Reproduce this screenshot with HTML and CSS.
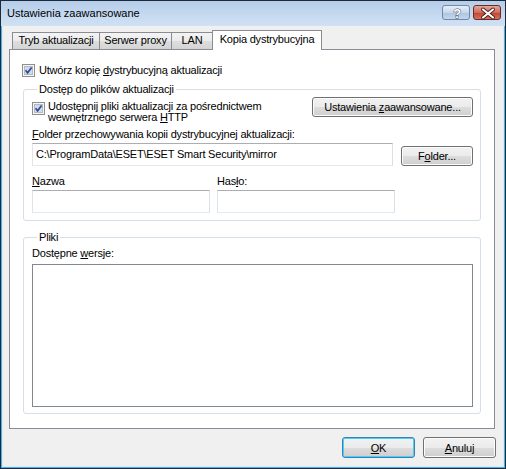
FILE: index.html
```html
<!DOCTYPE html>
<html lang="pl">
<head>
  <meta charset="UTF-8">
  <title>Ustawienia zaawansowane</title>
  <link rel="stylesheet" href="styles.css">
</head>
<body>
  <div class="window">
    <div class="titlebar">
      <span class="title">Ustawienia zaawansowane</span>
      <div class="caption-buttons">
        <span class="cap-btn help">
          <svg width="28" height="15" viewBox="0 0 28 15">
            <text x="14" y="12" text-anchor="middle" font-family="Liberation Sans, Arial, sans-serif" font-size="13" font-weight="bold" fill="#fff" stroke="#3b4a5e" stroke-width="0.9" paint-order="stroke">?</text>
          </svg>
        </span>
        <span class="cap-btn close">
          <svg width="28" height="15" viewBox="0 0 28 15">
            <path d="M9 3.5 L19 11.5 M19 3.5 L9 11.5" stroke="#4a1b17" stroke-width="3.8" stroke-linecap="round"/>
            <path d="M9 3.5 L19 11.5 M19 3.5 L9 11.5" stroke="#fff" stroke-width="2.1" stroke-linecap="round"/>
          </svg>
        </span>
      </div>
    </div>

    <div class="client">
      <div class="tabs">
        <div class="tab t-mode">Tryb aktualizacji</div>
        <div class="tab t-proxy">Serwer proxy</div>
        <div class="tab t-lan">LAN</div>
        <div class="tab t-mirror active">Kopia dystrybucyjna</div>
      </div>

      <div class="panel">
        <div class="check main-check">
          <span class="box">
            <svg width="13" height="13" viewBox="0 0 13 13">
              <rect x="0.5" y="0.5" width="12" height="12" fill="#f5f5f5" stroke="#8e8f8f"/>
              <rect x="2.5" y="2.5" width="8" height="8" fill="#d3dae3" stroke="#b3bac3"/>
              <path d="M3.6 6.2 L5.6 8.8 L9.6 3.4" fill="none" stroke="#2b4c9b" stroke-width="1.7"/>
            </svg>
          </span>
          <span>Utwórz kopię <u>d</u>ystrybucyjną aktualizacji</span>
        </div>

        <fieldset class="group access">
          <legend>Dostęp do plików aktualizacji</legend>
          <div class="share-row">
            <div class="check two-line">
              <span class="box">
                <svg width="13" height="13" viewBox="0 0 13 13">
                  <rect x="0.5" y="0.5" width="12" height="12" fill="#f5f5f5" stroke="#8e8f8f"/>
                  <rect x="2.5" y="2.5" width="8" height="8" fill="#d3dae3" stroke="#b3bac3"/>
                  <path d="M3.6 6.2 L5.6 8.8 L9.6 3.4" fill="none" stroke="#2b4c9b" stroke-width="1.7"/>
                </svg>
              </span>
              <span>Udostępnij pliki aktualizacji za pośrednictwem<br>wewnętrznego serwera <u>H</u>TTP</span>
            </div>
            <button class="btn wide">Ustawienia <u>z</u>aawansowane...</button>
          </div>

          <div class="label folder-label"><u>F</u>older przechowywania kopii dystrybucyjnej aktualizacji:</div>
          <div class="path-row">
            <div class="field path">C:\ProgramData\ESET\ESET Smart Security\mirror</div>
            <button class="btn small">F<u>o</u>lder...</button>
          </div>

          <div class="creds">
            <div class="cred">
              <div class="label"><u>N</u>azwa</div>
              <div class="field"></div>
            </div>
            <div class="cred">
              <div class="label">Has<u>ł</u>o:</div>
              <div class="field"></div>
            </div>
          </div>
        </fieldset>

        <fieldset class="group files">
          <legend>Pliki</legend>
          <div class="label versions-label">Dostępne <u>w</u>ersje:</div>
          <div class="listbox"></div>
        </fieldset>
      </div>

      <div class="footer">
        <button class="btn default"><u>O</u>K</button>
        <button class="btn"><u>A</u>nuluj</button>
      </div>
    </div>
  </div>
</body>
</html>
```

FILE: styles.css
```css
/* Okno dialogowe w stylu Vista */
* {
  box-sizing: border-box;
}
body {
  margin: 0;
  font-family: "Liberation Sans", Arial, sans-serif;
  font-size: 11px;
  letter-spacing: -0.2px;
  color: #000;
  background: #fff;
}
u {
  text-decoration: underline;
  text-underline-offset: 1px;
}
.window {
  width: 506px;
  height: 469px;
  border: 1px solid #1e2a38;
  display: flex;
  flex-direction: column;
  background: #f0f0f0;
}

/* Pasek tytułu */
.titlebar {
  height: 25px;
  flex: none;
  display: flex;
  justify-content: space-between;
  align-items: flex-start;
  padding: 0 4px 0 6px;
  background: linear-gradient(#b5cdea, #c6daf0 60%, #d0e1f4);
}
.title {
  line-height: 25px;
  font-size: 11px;
  letter-spacing: 0;
  color: #000;
}
.caption-buttons {
  display: flex;
  gap: 3px;
  margin-top: 4px;
}
.cap-btn {
  width: 28px;
  height: 15px;
  border-radius: 3px;
  display: block;
}
.cap-btn svg {
  display: block;
}
.help {
  border: 1px solid #7089aa;
  background: linear-gradient(#e6eef8, #c8d7ea 50%, #aec4df 51%, #c3d6ec);
}
.close {
  border: 1px solid #6e2a24;
  background: linear-gradient(#e3a79d, #cf6a5c 50%, #c0412f 51%, #d5735f);
}

/* Obszar klienta */
.client {
  flex: 1;
  display: flex;
  flex-direction: column;
  padding: 4px 9px 0 7px;
  border: 1px solid #4fb0e6;
  border-top: 0;
  box-shadow: inset 1px 0 #d9ebf7, inset -1px 0 #d9ebf7, inset 0 -1px #d9ebf7;
}

/* Zakładki */
.tabs {
  display: flex;
  align-items: flex-start;
  height: 20px;
  padding-left: 3px;
}
.tab {
  height: 17px;
  margin-top: 2px;
  margin-left: -1px;
  line-height: 15px;
  text-align: center;
  border: 1px solid #898c95;
  border-bottom: 0;
  background: linear-gradient(#f4f4f4, #ebebeb 50%, #dedede 51%, #d4d4d4);
  white-space: nowrap;
}
.tab:first-child {
  margin-left: 0;
}
.t-mode {
  width: 88px;
}
.t-proxy {
  width: 73px;
}
.t-lan {
  width: 42px;
}
.t-mirror {
  width: 110px;
}
.tab.active {
  position: relative;
  z-index: 1;
  height: 20px;
  margin-top: 0;
  line-height: 17px;
  background: #fff;
}

/* Panel zakładki */
.panel {
  height: 380px;
  margin-top: -1px;
  padding: 14px 13px 0 13px;
  border: 1px solid #898c95;
  background: #fff;
}
.check {
  display: flex;
  align-items: flex-start;
}
.box {
  width: 13px;
  height: 13px;
  flex: none;
  margin-right: 4px;
}
.box svg {
  display: block;
}
.main-check {
  margin-left: -1px;
  line-height: 13px;
}

/* Ramki grup */
.group {
  margin: 6px 0 0 0;
  padding: 0 7px 7px 8px;
  min-width: 0;
  border: 1px solid #d5dfe5;
  border-radius: 3px;
}
.group legend {
  margin-left: 5px;
  padding: 0 2px;
  line-height: 13px;
}
.files {
  margin-top: 10px;
  padding-bottom: 6px;
}
.share-row {
  display: flex;
  justify-content: space-between;
  align-items: flex-start;
  margin-top: 1px;
}
.two-line {
  line-height: 11px;
}
.two-line .box {
  margin-top: 5px;
  margin-right: 3px;
}
.two-line span:last-child {
  margin-top: 4px;
}
.label {
  line-height: 13px;
}
.folder-label {
  margin-top: 5px;
}
.path-row {
  display: flex;
  align-items: flex-end;
  gap: 8px;
  margin-top: 2px;
}
.field {
  height: 23px;
  padding: 0 3px;
  line-height: 21px;
  border: 1px solid;
  border-color: #abadb3 #dbdfe6 #e3e9ef #e2e3ea;
  background: #fff;
  white-space: nowrap;
}
.path {
  flex: 1;
}
.creds {
  display: flex;
  gap: 7px;
  margin-top: 9px;
}
.cred {
  display: flex;
  flex-direction: column;
  gap: 2px;
  width: 178px;
}
.versions-label {
  margin-top: 3px;
}
.listbox {
  height: 143px;
  margin-top: 4px;
  border: 1px solid #828790;
  background: #fff;
}

/* Przyciski */
.btn {
  height: 20px;
  padding: 0;
  font-family: inherit;
  font-size: 11px;
  letter-spacing: inherit;
  color: #000;
  border: 1px solid #707070;
  border-radius: 3px;
  background: linear-gradient(#f2f2f2, #ebebeb 50%, #dddddd 51%, #cfcfcf);
  box-shadow: inset 0 0 0 1px #fcfcfc;
}
.wide {
  width: 161px;
}
.small {
  width: 72px;
}
.footer {
  display: flex;
  justify-content: flex-end;
  gap: 8px;
  margin-top: 8px;
  margin-right: -1px;
}
.footer .btn {
  width: 73px;
  height: 21px;
}
.footer .default {
  border-color: #3c7fb1;
  box-shadow: inset 0 0 0 1px #48d0f8;
}
```
